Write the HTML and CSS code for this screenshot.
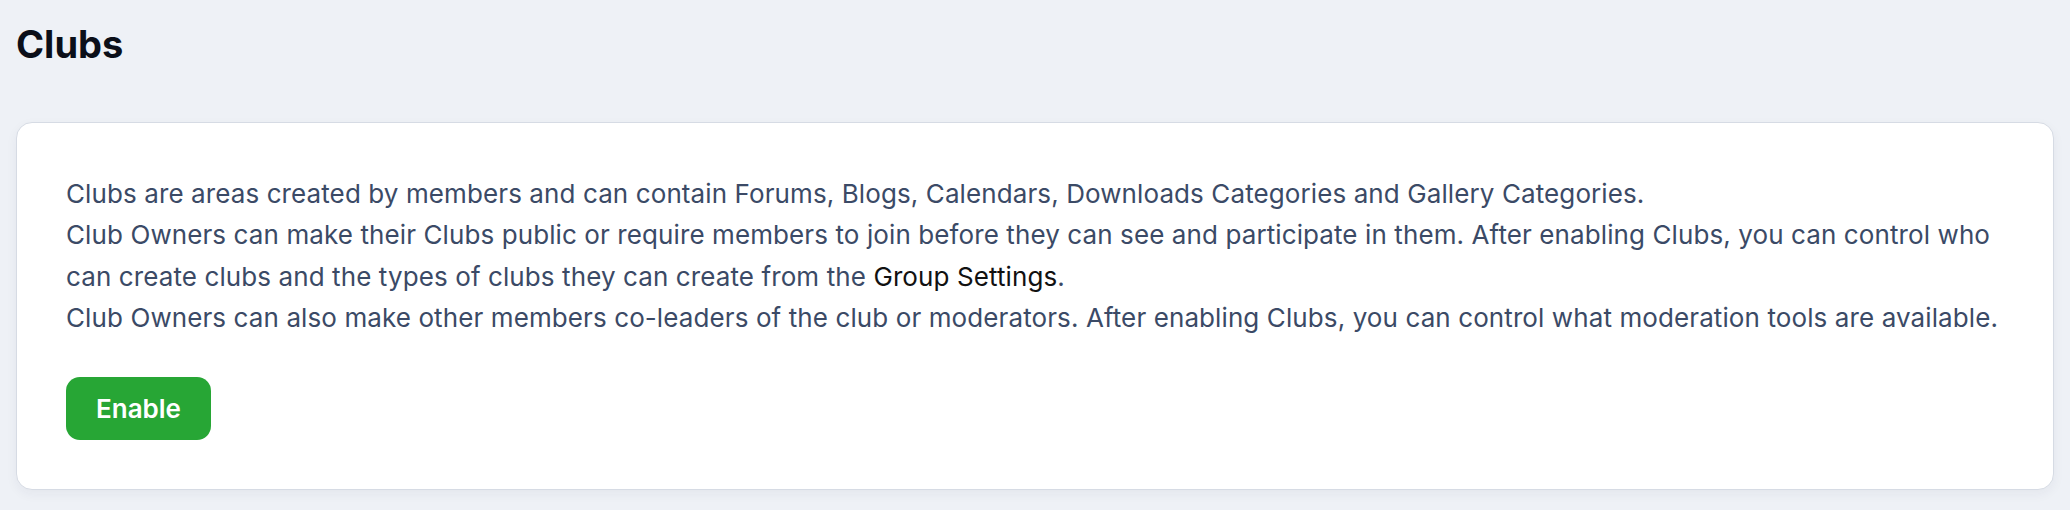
FILE: index.html
```html
<!DOCTYPE html>
<html lang="en">
<head>
    <meta charset="UTF-8">
    <meta name="viewport" content="width=device-width, initial-scale=1.0">
    <title>Clubs</title>
    <link rel="stylesheet" href="styles.css">
</head>
<body>
    <div class="page">
        <h1 class="page-title">Clubs</h1>

        <!-- Tarjeta de introduccion a los clubs -->
        <div class="card">
            <p class="intro">
                Clubs are areas created by members and can contain Forums, Blogs, Calendars, Downloads Categories and Gallery Categories.<br>
                Club Owners can make their Clubs public or require members to join before they can see and participate in them. After enabling Clubs, you can control who can create clubs and the types of clubs they can create from the <a href="/groups" class="intro-link">Group Settings</a>.<br>
                Club Owners can also make other members co-leaders of the club or moderators. After enabling Clubs, you can control what moderation tools are available.
            </p>
            <button class="btn-enable">Enable</button>
        </div>
    </div>
</body>
</html>
```

FILE: styles.css
```css
/* Estilos para la pagina de clubs */
body {
    font-family: Inter, "Noto Sans", sans-serif;
    margin: 0;
    padding: 0;
    background-color: #eef1f6;
}

.page {
    padding: 22px 16px 16px;
}

.page-title {
    margin: 0 0 54px;
    font-size: 38px;
    line-height: 1.2;
    font-weight: 700;
    color: #0b0f19;
}

.card {
    padding: 50px 48px 49px 49px;
    background: #fff;
    border: 1px solid #d6dbe4;
    border-radius: 16px;
    box-shadow: 0 4px 12px rgba(30, 40, 70, 0.05);
}

.intro {
    margin: 0 0 38px;
    font-size: 26px;
    line-height: 1.6;
    letter-spacing: 0.1px;
    color: #3b4a66;
}

.intro-link {
    color: #111;
    text-decoration: none;
}

.btn-enable {
    display: inline-block;
    padding: 11px 30px;
    font-family: inherit;
    font-size: 26px;
    line-height: 41px;
    font-weight: 600;
    color: #fff;
    background-color: #27a635;
    border: none;
    border-radius: 14px;
    cursor: pointer;
}
```
